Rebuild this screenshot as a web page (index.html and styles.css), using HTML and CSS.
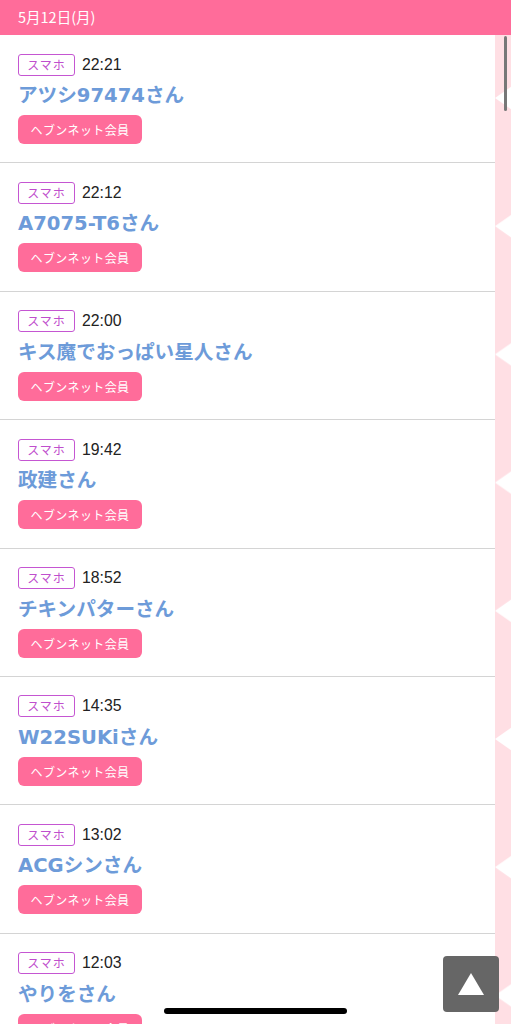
FILE: index.html
```html
<!DOCTYPE html>
<html lang="ja">
<head>
<meta charset="utf-8">
<link rel="stylesheet" href="styles.css">
</head>
<body>
<header class="date-bar">5月12日(月)</header>
<div class="layout">
  <ul class="list">
    <li class="item"><div class="meta"><span class="device">スマホ</span><span class="time">22:21</span></div><div class="name">アツシ97474さん</div><span class="member">ヘブンネット会員</span></li>
    <li class="item"><div class="meta"><span class="device">スマホ</span><span class="time">22:12</span></div><div class="name">A7075-T6さん</div><span class="member">ヘブンネット会員</span></li>
    <li class="item"><div class="meta"><span class="device">スマホ</span><span class="time">22:00</span></div><div class="name">キス魔でおっぱい星人さん</div><span class="member">ヘブンネット会員</span></li>
    <li class="item"><div class="meta"><span class="device">スマホ</span><span class="time">19:42</span></div><div class="name">政建さん</div><span class="member">ヘブンネット会員</span></li>
    <li class="item"><div class="meta"><span class="device">スマホ</span><span class="time">18:52</span></div><div class="name">チキンパターさん</div><span class="member">ヘブンネット会員</span></li>
    <li class="item"><div class="meta"><span class="device">スマホ</span><span class="time">14:35</span></div><div class="name">W22SUKiさん</div><span class="member">ヘブンネット会員</span></li>
    <li class="item"><div class="meta"><span class="device">スマホ</span><span class="time">13:02</span></div><div class="name">ACGシンさん</div><span class="member">ヘブンネット会員</span></li>
    <li class="item"><div class="meta"><span class="device">スマホ</span><span class="time">12:03</span></div><div class="name">やりをさん</div><span class="member">ヘブンネット会員</span></li>
  </ul>
  <div class="strip">
    <svg class="strip-pattern" width="16" height="1000" xmlns="http://www.w3.org/2000/svg">
      <defs>
        <pattern id="chev" x="0" y="63" width="16" height="128.2" patternUnits="userSpaceOnUse">
          <polygon points="0,128.2 16,117 16,139.4" fill="#ffffff"/>
          <polygon points="0,0 16,-11.2 16,11.2" fill="#ffffff"/>
        </pattern>
      </defs>
      <rect width="16" height="1000" fill="url(#chev)"/>
    </svg>
    <div class="scroll-thumb"></div>
  </div>
</div>
<button class="to-top" aria-label="ページトップ"><svg width="28" height="24" viewBox="0 0 28 24"><polygon points="14,1 27,23 1,23" fill="#fff"/></svg></button>
<div class="home-indicator"></div>
</body>
</html>
```
FILE: styles.css
```css
html, body {
  margin: 0;
  padding: 0;
  height: 1024px;
  overflow: hidden;
  background: #ffffff;
  font-family: "Noto Sans CJK JP", "Noto Sans", sans-serif;
}
.date-bar {
  height: 35px;
  box-sizing: border-box;
  padding-left: 18px;
  background: #ff6c9a;
  color: #ffffff;
  font-size: 14.5px;
  line-height: 33px;
}
.layout {
  display: flex;
  position: relative;
}
.list {
  list-style: none;
  margin: 0;
  padding: 0;
  width: 495px;
  flex: none;
}
.item {
  height: 128.4px;
  box-sizing: border-box;
  padding: 18px 18px 0;
  border-bottom: 1px solid #d4d4d4;
  display: flex;
  flex-direction: column;
  align-items: flex-start;
}
.meta {
  display: flex;
  align-items: center;
  gap: 7px;
  height: 23px;
}
.device {
  box-sizing: border-box;
  height: 22px;
  width: 57px;
  border: 1px solid #c556d2;
  border-radius: 3px;
  color: #bf4fcd;
  font-size: 12px;
  line-height: 19px;
  text-align: center;
  letter-spacing: 1px;
}
.time {
  font-family: "Liberation Sans", "Noto Sans", sans-serif;
  font-size: 15.8px;
  color: #222;
}
.name {
  margin-top: 6px;
  font-family: "DejaVu Sans", "Noto Sans CJK JP", sans-serif;
  font-size: 19.6px;
  font-weight: 700;
  line-height: 28px;
  color: #6d9bd9;
}
.member {
  margin-top: 5px;
  box-sizing: border-box;
  width: 124px;
  height: 29px;
  border-radius: 6px;
  background: #ff6c9a;
  color: #ffffff;
  font-size: 12px;
  line-height: 29px;
  text-align: center;
  letter-spacing: 0.4px;
}
.strip {
  position: relative;
  width: 16px;
  flex: none;
  background: #ffdfe4;
  height: 989px;
  overflow: hidden;
}
.strip-pattern {
  display: block;
}
.scroll-thumb {
  position: absolute;
  left: 9px;
  top: 1px;
  width: 3px;
  height: 75px;
  border-radius: 2px;
  background: #777777;
}
.to-top {
  position: absolute;
  left: 443px;
  top: 956px;
  width: 56px;
  height: 56px;
  border: none;
  border-radius: 4px;
  background: #666666;
  padding: 0;
  display: flex;
  align-items: center;
  justify-content: center;
}
.home-indicator {
  position: absolute;
  left: 164px;
  top: 1008px;
  width: 183px;
  height: 6px;
  border-radius: 3px;
  background: #000000;
}
```
